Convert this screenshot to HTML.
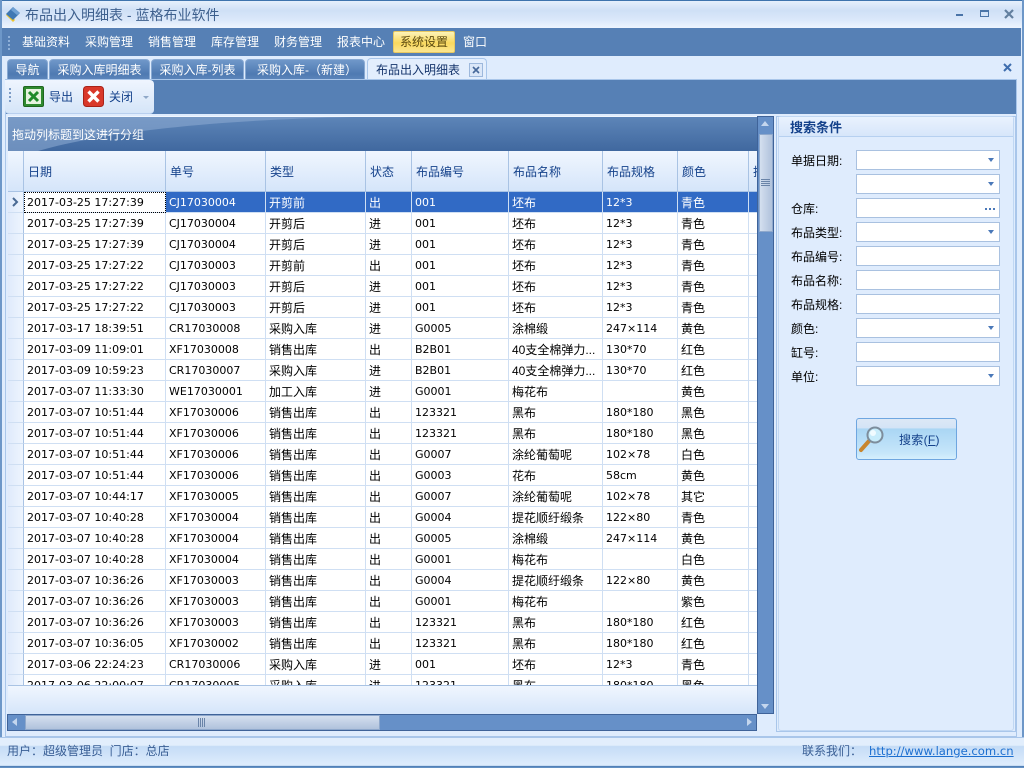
<!DOCTYPE html>
<html lang="zh"><head><meta charset="utf-8"><title>布品出入明细表</title>
<style>
*{box-sizing:border-box}
html,body{margin:0;padding:0}
body{width:1024px;height:768px;position:relative;overflow:hidden;background:#dfecfd;font:12px/14px "Liberation Sans","WenQuanYi Zen Hei","Noto Sans CJK SC",sans-serif;color:#000}
.a{position:absolute;white-space:nowrap}
#title{left:0;top:0;width:1024px;height:28px;background:linear-gradient(#e6f0fc 0,#cfe0f6 35%,#dbe8fa 70%,#eef5fe 100%);border-top:1px solid #3f74ad}
#menu{left:2px;top:28px;width:1019px;height:28px;background:#5680b5}
.m{top:35px;color:#fff}
.tab{top:59px;height:21px;background:linear-gradient(#6f97c9,#4f7ab2 70%,#5d86bb);border:1px solid #88a9d3;border-bottom:0;border-radius:4px 4px 0 0;color:#fff;text-align:center;line-height:20px}
table{border-collapse:separate;border-spacing:0;table-layout:fixed;background:#fff}
td{height:21px;padding:2px 0 0 3px;border-right:1px solid #cfdff3;border-bottom:1px solid #cfdff3;white-space:nowrap;overflow:hidden;font-size:12px;line-height:18px}
td.l{font-family:"DejaVu Sans",sans-serif;font-size:11px}
td.h{background:linear-gradient(90deg,#dfeafb,#eef5fe);padding:0;border-right:1px solid #a9c3e4}
tr.s td{background:#316ac5;color:#fff}
tr.s td.h{background:linear-gradient(90deg,#dfeafb,#eef5fe);color:#4a6a94}
tr.s td.d{background:#fff;color:#000;outline:1px dotted #000;outline-offset:-1px}
.th{top:151px;height:41px;background:linear-gradient(#f0f6fe,#d5e5fa);border-right:1px solid #a9c3e4;border-bottom:1px solid #a9c3e4;color:#15428b;line-height:42px;padding-left:4px;overflow:hidden}
.lb{left:791px;height:14px}
.f{left:856px;width:144px;height:20px;background:#fff;border:1px solid #a9c1e0}
.f.c:after{content:"";position:absolute;right:5px;top:7px;border:3px solid transparent;border-top:4px solid #4a78b8;border-bottom:0}
</style></head><body>

<div class="a" id="title"></div>
<div class="a" style="left:0;top:0;width:2px;height:768px;background:#6d97c8"></div>
<div class="a" style="right:0;top:0;width:2px;height:768px;background:#6d97c8"></div>
<svg class="a" style="left:4px;top:5px" width="18" height="18" viewBox="0 0 18 18"><path d="M2 10 9 17 11 15 5 7Z" fill="#f0c52a"/><path d="M2 9 9 2 16 8 9 15Z" fill="#3f78b4"/><path d="M9 2 16 8 13 10 7 5Z" fill="#6ea0d4"/></svg>
<div class="a" style="left:25px;top:7px;font-size:14px;line-height:16px;color:#3d5f8d">布品出入明细表 - 蓝格布业软件</div>
<div class="a" style="left:956px;top:14px;width:7px;height:2px;background:#4a74a8"></div>
<div class="a" style="left:980px;top:10px;width:9px;height:7px;border:1px solid #4a74a8;border-top-width:2px"></div>
<svg class="a" style="left:1004px;top:9px" width="10" height="10" viewBox="0 0 10 10"><path d="M1 1 9 9M9 1 1 9" stroke="#627f9f" stroke-width="2.2"/></svg>

<div class="a" id="menu"></div>
<div class="a" style="left:8px;top:36px;height:14px;width:2px;background:repeating-linear-gradient(#8fb0d8 0 2px,transparent 2px 4px)"></div>
<div class="a m" style="left:22px">基础资料</div>
<div class="a m" style="left:85px">采购管理</div>
<div class="a m" style="left:148px">销售管理</div>
<div class="a m" style="left:211px">库存管理</div>
<div class="a m" style="left:274px">财务管理</div>
<div class="a m" style="left:337px">报表中心</div>
<div class="a" style="left:393px;top:31px;width:62px;height:22px;background:linear-gradient(#fdf3b8,#f9d85e 55%,#fbe690);border:1px solid #e8c860;border-radius:2px;color:#5b4a10;text-align:center;line-height:20px">系统设置</div>
<div class="a m" style="left:463px">窗口</div>

<div class="a tab" style="left:7px;width:41px">导航</div>
<div class="a tab" style="left:49px;width:101px">采购入库明细表</div>
<div class="a tab" style="left:151px;width:93px">采购入库-列表</div>
<div class="a tab" style="left:245px;width:120px;padding-left:4px">采购入库-（新建）</div>
<div class="a" style="left:367px;top:58px;width:120px;height:22px;background:#e3eefd;border:1px solid #a9c6ea;border-bottom:0;border-radius:4px 4px 0 0;color:#15346b;padding-left:8px;line-height:22px">布品出入明细表</div>
<div class="a" style="left:469px;top:63px;width:14px;height:14px;border:1px solid #9db8dc;background:#dbe7f8"></div>
<svg class="a" style="left:472px;top:66px" width="8" height="8" viewBox="0 0 8 8"><path d="M1 1 7 7M7 1 1 7" stroke="#46689a" stroke-width="1.6"/></svg>
<svg class="a" style="left:1003px;top:63px" width="9" height="9" viewBox="0 0 9 9"><path d="M1 1 8 8M8 1 1 8" stroke="#3f6eae" stroke-width="2"/></svg>

<div class="a" style="left:5px;top:79px;width:1012px;height:658px;background:#dfecfd;border:1px solid #a9c6ea"></div>
<div class="a" style="left:6px;top:80px;width:1010px;height:34px;background:#5680b5"></div>
<div class="a" style="left:5px;top:80px;width:149px;height:34px;background:linear-gradient(#eff5fe,#d5e5f8);border-radius:0 4px 4px 4px;border-bottom:1px solid #b8cfee"></div>
<div class="a" style="left:9px;top:88px;height:16px;width:2px;background:repeating-linear-gradient(#7d9cc6 0 2px,transparent 2px 4px)"></div>
<svg class="a" style="left:23px;top:86px" width="21" height="21" viewBox="0 0 21 21"><rect x=".5" y=".5" width="20" height="20" rx="1.5" fill="#2f8a2f" stroke="#1f661f"/><rect x="3" y="3" width="15" height="15" fill="#e6f3df"/><path d="M6 6 15 15M15 6 6 15" stroke="#1f8a2a" stroke-width="3"/></svg>
<div class="a" style="left:49px;top:90px;color:#15428b">导出</div>
<svg class="a" style="left:83px;top:86px" width="21" height="21" viewBox="0 0 21 21"><rect x=".5" y=".5" width="20" height="20" rx="3" fill="#d9382a" stroke="#a82218"/><path d="M5.5 5.5 15.5 15.5M15.5 5.5 5.5 15.5" stroke="#fff" stroke-width="3.4"/></svg>
<div class="a" style="left:109px;top:90px;color:#15428b">关闭</div>
<div class="a" style="left:143px;top:96px;border:3px solid transparent;border-top:3px solid #8fa8c8;border-bottom:0"></div>

<!-- grid -->
<div class="a" style="left:7px;top:116px;width:751px;height:35px;background:linear-gradient(#5d85b8,#40689f);overflow:hidden;border-top:1px solid #f0f6fe;border-left:1px solid #dce9fa">
<svg style="position:absolute;left:0;top:0" width="751" height="35"><path d="M0 0H345C210 3 100 14 30 34H0Z" fill="#8aa9d0" opacity=".6"/></svg>
<div class="a" style="left:4px;top:11px;color:#fff">拖动列标题到这进行分组</div></div>

<div class="a th" style="left:8px;width:16px"></div>
<div class="a th" style="left:24px;width:142px">日期</div>
<div class="a th" style="left:166px;width:100px">单号</div>
<div class="a th" style="left:266px;width:100px">类型</div>
<div class="a th" style="left:366px;width:46px">状态</div>
<div class="a th" style="left:412px;width:97px">布品编号</div>
<div class="a th" style="left:509px;width:94px">布品名称</div>
<div class="a th" style="left:603px;width:75px">布品规格</div>
<div class="a th" style="left:678px;width:71px">颜色</div>
<div class="a th" style="left:749px;width:9px">批号</div>

<div class="a" style="left:8px;top:192px;width:750px;height:493px;overflow:hidden;background:#fff">
<table style="width:750px"><colgroup><col style="width:16px"><col style="width:142px"><col style="width:100px"><col style="width:100px"><col style="width:46px"><col style="width:97px"><col style="width:94px"><col style="width:75px"><col style="width:71px"><col style="width:9px"></colgroup>
<tr class="s"><td class="h"><svg width="15" height="20" style="display:block"><path d="M5 6 9 10 5 14" fill="none" stroke="#4a6a94" stroke-width="2"/></svg></td><td class="l d">2017-03-25 17:27:39</td><td class="l">CJ17030004</td><td>开剪前</td><td>出</td><td class="l">001</td><td>坯布</td><td class="l">12*3</td><td>青色</td><td></td></tr>
<tr><td class="h"></td><td class="l">2017-03-25 17:27:39</td><td class="l">CJ17030004</td><td>开剪后</td><td>进</td><td class="l">001</td><td>坯布</td><td class="l">12*3</td><td>青色</td><td></td></tr>
<tr><td class="h"></td><td class="l">2017-03-25 17:27:39</td><td class="l">CJ17030004</td><td>开剪后</td><td>进</td><td class="l">001</td><td>坯布</td><td class="l">12*3</td><td>青色</td><td></td></tr>
<tr><td class="h"></td><td class="l">2017-03-25 17:27:22</td><td class="l">CJ17030003</td><td>开剪前</td><td>出</td><td class="l">001</td><td>坯布</td><td class="l">12*3</td><td>青色</td><td></td></tr>
<tr><td class="h"></td><td class="l">2017-03-25 17:27:22</td><td class="l">CJ17030003</td><td>开剪后</td><td>进</td><td class="l">001</td><td>坯布</td><td class="l">12*3</td><td>青色</td><td></td></tr>
<tr><td class="h"></td><td class="l">2017-03-25 17:27:22</td><td class="l">CJ17030003</td><td>开剪后</td><td>进</td><td class="l">001</td><td>坯布</td><td class="l">12*3</td><td>青色</td><td></td></tr>
<tr><td class="h"></td><td class="l">2017-03-17 18:39:51</td><td class="l">CR17030008</td><td>采购入库</td><td>进</td><td class="l">G0005</td><td>涂棉缎</td><td class="l">247×114</td><td>黄色</td><td></td></tr>
<tr><td class="h"></td><td class="l">2017-03-09 11:09:01</td><td class="l">XF17030008</td><td>销售出库</td><td>出</td><td class="l">B2B01</td><td>40支全棉弹力...</td><td class="l">130*70</td><td>红色</td><td></td></tr>
<tr><td class="h"></td><td class="l">2017-03-09 10:59:23</td><td class="l">CR17030007</td><td>采购入库</td><td>进</td><td class="l">B2B01</td><td>40支全棉弹力...</td><td class="l">130*70</td><td>红色</td><td></td></tr>
<tr><td class="h"></td><td class="l">2017-03-07 11:33:30</td><td class="l">WE17030001</td><td>加工入库</td><td>进</td><td class="l">G0001</td><td>梅花布</td><td class="l"></td><td>黄色</td><td></td></tr>
<tr><td class="h"></td><td class="l">2017-03-07 10:51:44</td><td class="l">XF17030006</td><td>销售出库</td><td>出</td><td class="l">123321</td><td>黑布</td><td class="l">180*180</td><td>黑色</td><td></td></tr>
<tr><td class="h"></td><td class="l">2017-03-07 10:51:44</td><td class="l">XF17030006</td><td>销售出库</td><td>出</td><td class="l">123321</td><td>黑布</td><td class="l">180*180</td><td>黑色</td><td></td></tr>
<tr><td class="h"></td><td class="l">2017-03-07 10:51:44</td><td class="l">XF17030006</td><td>销售出库</td><td>出</td><td class="l">G0007</td><td>涂纶葡萄呢</td><td class="l">102×78</td><td>白色</td><td></td></tr>
<tr><td class="h"></td><td class="l">2017-03-07 10:51:44</td><td class="l">XF17030006</td><td>销售出库</td><td>出</td><td class="l">G0003</td><td>花布</td><td class="l">58cm</td><td>黄色</td><td></td></tr>
<tr><td class="h"></td><td class="l">2017-03-07 10:44:17</td><td class="l">XF17030005</td><td>销售出库</td><td>出</td><td class="l">G0007</td><td>涂纶葡萄呢</td><td class="l">102×78</td><td>其它</td><td></td></tr>
<tr><td class="h"></td><td class="l">2017-03-07 10:40:28</td><td class="l">XF17030004</td><td>销售出库</td><td>出</td><td class="l">G0004</td><td>提花顺纡缎条</td><td class="l">122×80</td><td>青色</td><td></td></tr>
<tr><td class="h"></td><td class="l">2017-03-07 10:40:28</td><td class="l">XF17030004</td><td>销售出库</td><td>出</td><td class="l">G0005</td><td>涂棉缎</td><td class="l">247×114</td><td>黄色</td><td></td></tr>
<tr><td class="h"></td><td class="l">2017-03-07 10:40:28</td><td class="l">XF17030004</td><td>销售出库</td><td>出</td><td class="l">G0001</td><td>梅花布</td><td class="l"></td><td>白色</td><td></td></tr>
<tr><td class="h"></td><td class="l">2017-03-07 10:36:26</td><td class="l">XF17030003</td><td>销售出库</td><td>出</td><td class="l">G0004</td><td>提花顺纡缎条</td><td class="l">122×80</td><td>黄色</td><td></td></tr>
<tr><td class="h"></td><td class="l">2017-03-07 10:36:26</td><td class="l">XF17030003</td><td>销售出库</td><td>出</td><td class="l">G0001</td><td>梅花布</td><td class="l"></td><td>紫色</td><td></td></tr>
<tr><td class="h"></td><td class="l">2017-03-07 10:36:26</td><td class="l">XF17030003</td><td>销售出库</td><td>出</td><td class="l">123321</td><td>黑布</td><td class="l">180*180</td><td>红色</td><td></td></tr>
<tr><td class="h"></td><td class="l">2017-03-07 10:36:05</td><td class="l">XF17030002</td><td>销售出库</td><td>出</td><td class="l">123321</td><td>黑布</td><td class="l">180*180</td><td>红色</td><td></td></tr>
<tr><td class="h"></td><td class="l">2017-03-06 22:24:23</td><td class="l">CR17030006</td><td>采购入库</td><td>进</td><td class="l">001</td><td>坯布</td><td class="l">12*3</td><td>青色</td><td></td></tr>
<tr><td class="h"></td><td class="l">2017-03-06 22:00:07</td><td class="l">CR17030005</td><td>采购入库</td><td>进</td><td class="l">123321</td><td>黑布</td><td class="l">180*180</td><td>黑色</td><td></td></tr>
</table></div>
<div class="a" style="left:8px;top:685px;width:750px;height:29px;background:linear-gradient(#f0f6fe,#d5e5fa);border-top:1px solid #a9c3e4"></div>

<!-- vertical scrollbar -->
<div class="a" style="left:757px;top:116px;width:17px;height:598px;background:#6690c8;border:1px solid #3f6399"></div>
<div class="a" style="left:759px;top:134px;width:14px;height:98px;background:linear-gradient(90deg,#d4dfef,#b0c2dc);border:1px solid #8ea8cc"></div>
<div class="a" style="left:761px;top:179px;width:9px;height:8px;background:repeating-linear-gradient(#6a84a8 0 1px,transparent 1px 2px)"></div>
<div class="a" style="left:761px;top:121px;border:4px solid transparent;border-bottom:5px solid #c4d6ee;border-top:0"></div>
<div class="a" style="left:761px;top:704px;border:4px solid transparent;border-top:5px solid #c4d6ee;border-bottom:0"></div>
<!-- horizontal scrollbar -->
<div class="a" style="left:7px;top:714px;width:750px;height:17px;background:#6690c8;border:1px solid #3f6399"></div>
<div class="a" style="left:25px;top:715px;width:355px;height:15px;background:linear-gradient(#d4dfef,#b0c2dc);border:1px solid #8ea8cc"></div>
<div class="a" style="left:198px;top:718px;width:8px;height:9px;background:repeating-linear-gradient(90deg,#6a84a8 0 1px,transparent 1px 2px)"></div>
<div class="a" style="left:12px;top:718px;border:4px solid transparent;border-right:5px solid #c4d6ee;border-left:0"></div>
<div class="a" style="left:747px;top:718px;border:4px solid transparent;border-left:5px solid #c4d6ee;border-right:0"></div>

<!-- search panel -->
<div class="a" style="left:776px;top:116px;width:240px;height:616px;background:#dfecfd;border:1px solid #a9c6ea"></div>
<div class="a" style="left:778px;top:116px;width:236px;height:615px;background:#dfecfd;border:1px solid #c0d7f3;border-radius:3px"></div>
<div class="a" style="left:779px;top:117px;width:234px;height:20px;background:linear-gradient(#e9f2fe,#d7e6fa);border-bottom:1px solid #b6d0f0"></div>
<div class="a" style="left:790px;top:121px;font-size:13px;font-weight:bold;color:#15428b">搜索条件</div>
<div class="a lb" style="top:154px">单据日期:</div><div class="a f c" style="top:150px"></div>
<div class="a f c" style="top:174px"></div>
<div class="a lb" style="top:202px">仓库:</div><div class="a f" style="top:198px"><span class="a" style="left:128px;top:9px;width:12px;height:2px;background:repeating-linear-gradient(90deg,#4a78b8 0 2px,transparent 2px 4px)"></span></div>
<div class="a lb" style="top:226px">布品类型:</div><div class="a f c" style="top:222px"></div>
<div class="a lb" style="top:250px">布品编号:</div><div class="a f" style="top:246px"></div>
<div class="a lb" style="top:274px">布品名称:</div><div class="a f" style="top:270px"></div>
<div class="a lb" style="top:298px">布品规格:</div><div class="a f" style="top:294px"></div>
<div class="a lb" style="top:322px">颜色:</div><div class="a f c" style="top:318px"></div>
<div class="a lb" style="top:346px">缸号:</div><div class="a f" style="top:342px"></div>
<div class="a lb" style="top:370px">单位:</div><div class="a f c" style="top:366px"></div>

<div class="a" style="left:856px;top:418px;width:101px;height:42px;border:1px solid #6ea6e0;border-radius:3px;background:linear-gradient(#dce8f6 0,#d4e4f6 22%,#aad6f4 25%,#c6e6fa 85%,#d6effd 100%)"></div>
<svg class="a" style="left:859px;top:425px" width="28" height="28" viewBox="0 0 28 28"><path d="M2 25 10 16" stroke="#c8862e" stroke-width="4" stroke-linecap="round"/><circle cx="16" cy="10" r="7.5" fill="#c7ecfb" stroke="#7d8d9c" stroke-width="2"/><circle cx="14" cy="8" r="3" fill="#f0fbff"/></svg>
<div class="a" style="left:899px;top:433px;color:#15428b;letter-spacing:.3px">搜索(<u>F</u>)</div>

<!-- status -->
<div class="a" style="left:0;top:737px;width:1024px;height:31px;background:linear-gradient(#e2eefc 0,#e2eefc 24%,#c5dcf6 28%,#dcebfc 85%,#dcebfc 92%,#4d7db5 94%,#6d97c8 100%);border-top:1px solid #a9c6ea"></div>
<div class="a" style="left:7px;top:744px;color:#3a5f95">用户：超级管理员 &nbsp;门店：总店</div>
<div class="a" style="left:802px;top:744px;color:#3a5f95">联系我们：</div>
<div class="a" style="left:869px;top:744px;color:#1c6fd0;text-decoration:underline;font-family:'DejaVu Sans',sans-serif;font-size:11.6px">http://www.lange.com.cn</div>
</body></html>
